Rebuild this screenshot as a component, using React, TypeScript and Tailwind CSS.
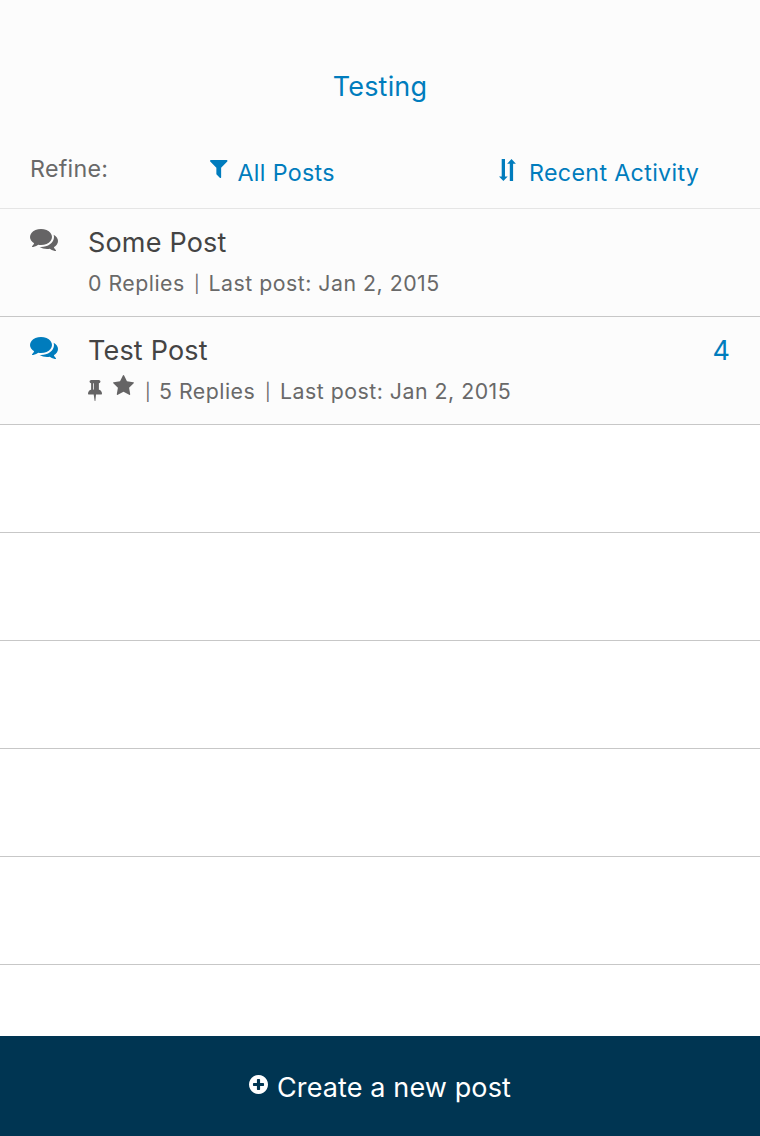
import React from "react";

const PATHS = {
  comments:
    "M1408 768q0 139-94 257t-256.5 186.5-353.5 68.5q-86 0-176-16-124 88-278 128-36 9-86 16h-3q-11 0-20.5-8t-11.5-21q-1-3-1-6.5t.5-6.5 2-6l2.5-5 3.5-5.5 4-5 4.5-5 4-4.5q5-6 23-25t26-29.5 22.5-29 25-38.5 20.5-44q-124-72-195-177t-71-224q0-139 94-257t256.5-186.5 353.5-68.5 353.5 68.5 256.5 186.5 94 257zm384 256q0 120-71 224.5t-195 176.5q10 24 20.5 44t25 38.5 22.5 29 26 29.5 23 25q1 1 4 4.5t4.5 5 4 5 3.5 5.5l2.5 5 2 6 .5 6.5-1 6.5q-3 14-13 22t-22 7q-50-7-86-16-154-40-278-128-90 16-176 16-271 0-472-132 58 4 88 4 161 0 309-45t264-129q125-92 192-212t67-254q0-77-23-152 129 71 204 178t75 230z",
  filter:
    "M1595 295q17 41-14 70l-493 493v742q0 42-39 59-13 5-25 5-27 0-45-19l-256-256q-19-19-19-45v-486l-493-493q-31-29-14-70 17-39 59-39h1280q42 0 59 39z",
  pin: "M800 864v-448q0-14-9-23t-23-9-23 9-9 23v448q0 14 9 23t23 9 23-9 9-23zm672 352q0 26-19 45t-45 19h-429l-51 483q-2 12-10.5 20.5t-20.5 8.5h-1q-27 0-32-27l-76-485h-404q-26 0-45-19t-19-45q0-123 78.5-221.5t177.5-98.5v-512q-52 0-90-38t-38-90 38-90 90-38h640q52 0 90 38t38 90-38 90-90 38v512q99 0 177.5 98.5t78.5 221.5z",
  star: "M1728 647q0 22-26 48l-363 354 86 500q1 7 1 20 0 21-10.5 35.5t-30.5 14.5q-19 0-40-12l-449-236-449 236q-22 12-40 12-21 0-31.5-14.5t-10.5-35.5q0-6 2-20l86-500-364-354q-25-27-25-48 0-37 56-46l502-73 225-455q19-41 49-41t49 41l225 455 502 73q56 9 56 46z",
  plus: "M1344 960v-128q0-26-19-45t-45-19h-256v-256q0-26-19-45t-45-19h-128q-26 0-45 19t-19 45v256h-256q-26 0-45 19t-19 45v128q0 26 19 45t45 19h256v256q0 26 19 45t45 19h128q26 0 45-19t19-45v-256h256q26 0 45-19t19-45zm320-64q0 209-103 385.5t-279.5 279.5-385.5 103-385.5-103-279.5-279.5-103-385.5 103-385.5 279.5-279.5 385.5-103 385.5 103 279.5 279.5 103 385.5z",
};

function Icon({ name, box, className }: { name: keyof typeof PATHS; box: string; className: string }) {
  return (
    <svg viewBox={box} preserveAspectRatio="none" fill="currentColor" className={`block shrink-0 ${className}`} aria-hidden="true">
      <path d={PATHS[name]} />
    </svg>
  );
}

function SortIcon() {
  return (
    <svg viewBox="0 0 17 22" fill="currentColor" className="mt-[33px] block h-[22px] w-[17px] shrink-0" aria-hidden="true">
      <path d="M2.7 0h3.3v17.4h2.7L4.4 22 0 17.4h2.7z" />
      <path d="M10.8 22h3.3V4.8h2.8L12.5 0 8.1 4.8h2.7z" />
    </svg>
  );
}

function Divider() {
  return <span className="mt-px w-[15px] pl-px text-[17px] tracking-normal">|</span>;
}

interface PostProps {
  title: string;
  replies: string;
  unread?: string;
  flagged?: boolean;
}

function PostRow({ title, replies, unread, flagged }: PostProps) {
  return (
    <li className="flex h-[108px] border-b border-[#c7c7c7] bg-[#fcfcfc] pl-[30px] pr-[30px]">
      <div className={unread ? "w-[58px] text-[#007cbd]" : "w-[58px] text-[#656465]"}>
        <Icon name="comments" box="0 0 1792 1792" className="mt-4 h-7 w-7" />
      </div>
      <div className="flex-1">
        <h2 className="mt-[14px] text-[27px] leading-[40px] tracking-[0.18px] text-[#444444]">{title}</h2>
        <div className="flex text-[21.3px] leading-[40px] tracking-[0.5px] text-[#696969]">
          {flagged && (
            <>
              <Icon name="pin" box="320 128 1152 1664" className="mt-[9px] h-[21px] w-[14px] text-[#656465]" />
              <Icon name="star" box="64 32 1664 1587" className="ml-[11px] mt-1 h-5 w-[21px] text-[#656465]" />
              <span className="ml-[10px] flex"><Divider /></span>
            </>
          )}
          <span className="w-[105px]">{replies}</span>
          <Divider />
          <span className={flagged ? "ml-px" : "ml-[0.5px]"}>Last post: Jan 2, 2015</span>
        </div>
      </div>
      {unread && <span className="mt-[14px] text-[27px] leading-[40px] text-[#007cbd]">{unread}</span>}
    </li>
  );
}

export default function App() {
  return (
    <div className="flex h-[1136px] w-[760px] flex-col overflow-hidden bg-white font-['Inter',sans-serif] font-normal antialiased">
      <header className="h-[209px] border-b border-[#e5e5e5] bg-[#fcfcfc] pt-[67px]">
        <h1 className="text-center text-[27px] leading-[40px] tracking-[0.2px] text-[#007cbd]">Testing</h1>
        <div className="mt-[19px] flex pl-[30px] text-[23.25px] leading-[40px] text-[#007cbd]">
          <span className="mt-[23px] w-[180px] tracking-[0.27px] text-[#696969]">Refine:</span>
          <div className="flex w-[289px]">
            <Icon name="filter" box="192 256 1408 1408" className="mt-[34px] h-[18px] w-[17.5px]" />
            <span className="ml-[10px] mt-[27px] tracking-[0.33px]">All Posts</span>
          </div>
          <div className="flex">
            <SortIcon />
            <span className="ml-[13px] mt-[27px] tracking-[0.33px]">Recent Activity</span>
          </div>
        </div>
      </header>
      <ul className="min-h-0 flex-1 overflow-hidden">
        <PostRow title="Some Post" replies="0 Replies" />
        <PostRow title="Test Post" replies="5 Replies" unread="4" flagged />
        {[0, 1, 2, 3, 4].map((n) => (
          <li key={n} className="h-[108px] border-b border-[#c7c7c7]" />
        ))}
      </ul>
      <button className="flex h-[100px] shrink-0 bg-[#003552] pl-[249px] text-[27px] leading-[40px] text-white">
        <Icon name="plus" box="128 128 1536 1536" className="mt-[38.5px] h-[19px] w-[19px]" />
        <span className="ml-[9px] mt-8 tracking-[0.12px]">Create a new post</span>
      </button>
    </div>
  );
}
